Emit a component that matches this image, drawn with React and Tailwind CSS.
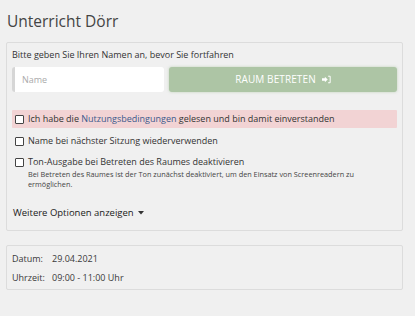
import React from 'react';

const Check = () => (
    <span className="inline-block w-[9px] h-[9px] border border-[#444] bg-white rounded-[1px] mr-[4px] shrink-0" />
);

export default function App() {
    return (
        <div className="min-h-[316px] w-[415px] bg-[#f0f0f0] text-[#333] px-[6px] pt-[9px] font-['Open_Sans',sans-serif]">
            {/* Title */}
            <h1 className="text-[15.5px] leading-[24px] text-[#444] pl-[1px] mb-[9px]">Unterricht Dörr</h1>

            {/* Login panel */}
            <div className="w-[397px] border border-[#dcdcdc] rounded-[2px] px-[5px] pt-[4px] pb-[10px]">
                <p className="text-[9px] leading-[16px] text-[#333] mb-[4px]">
                    Bitte geben Sie Ihren Namen an, bevor Sie fortfahren
                </p>
                <div className="flex gap-[5px]">
                    <div className="w-[152px] h-[25px] bg-white rounded-[3px] border-l-[3px] border-[#d6d6d6] flex items-center pl-[7px] text-[9px] text-[#aaa]">
                        Name
                    </div>
                    <button className="flex-1 h-[25px] bg-[#adc5a5] rounded-[3px] shadow-[0_0_3px_rgba(160,190,150,0.6)] flex items-center justify-center gap-[6px] text-white text-[10px] tracking-[0.1px]">
                        RAUM BETRETEN
                        <svg width="9" height="9" viewBox="0 0 11 10" fill="none">
                            <path d="M0 3.5h3.5V1.5L7 5 3.5 8.5V6.5H0z" fill="white" />
                            <path d="M7.5 1H10v8H7.5" stroke="white" strokeWidth="1.2" />
                        </svg>
                    </button>
                </div>

                {/* Options */}
                <div className="mt-[18px] h-[18px] bg-[#f2d3d4] rounded-[1px] flex items-center pl-[3px] text-[9px]">
                    <Check />
                    <span>
                        Ich habe die <span className="text-[#3c5a8c]">Nutzungsbedingungen</span> gelesen und bin damit einverstanden
                    </span>
                </div>
                <div className="mt-[5px] h-[16px] flex items-center pl-[3px] text-[9px]">
                    <Check />
                    <span>Name bei nächster Sitzung wiederverwenden</span>
                </div>
                <div className="mt-[5px] flex items-start pl-[3px]">
                    <span className="mt-[4px] flex"><Check /></span>
                    <div>
                        <div className="text-[9px] leading-[16px]">Ton-Ausgabe bei Betreten des Raumes deaktivieren</div>
                        <div className="text-[7.3px] leading-[10px] text-[#444] mt-[-1px]">
                            Bei Betreten des Raumes ist der Ton zunächst deaktiviert, um den Einsatz von Screenreadern zu
                            <br />
                            ermöglichen.
                        </div>
                    </div>
                </div>

                <div className="mt-[17px] text-[9.5px] font-medium text-[#1a1a1a] flex items-center gap-[4px] pl-[1px]">
                    Weitere Optionen anzeigen
                    <svg width="6" height="4" viewBox="0 0 6 4"><path d="M0 0h6L3 3.5z" fill="#333" /></svg>
                </div>
            </div>

            {/* Date panel */}
            <div className="mt-[14px] w-[397px] border border-[#dcdcdc] rounded-[2px] px-[5px] pt-[3px] pb-[2px] text-[9px] leading-[19px] text-[#3a3a3a]">
                <div className="flex">
                    <span className="w-[40px]">Datum:</span>
                    <span>29.04.2021</span>
                </div>
                <div className="flex">
                    <span className="w-[40px]">Uhrzeit:</span>
                    <span>09:00 - 11:00 Uhr</span>
                </div>
            </div>
        </div>
    );
}
